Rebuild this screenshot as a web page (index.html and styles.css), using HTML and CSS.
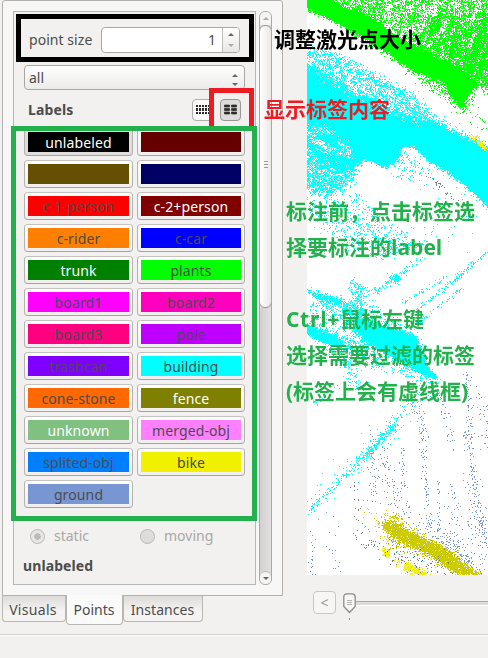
FILE: index.html
```html
<!DOCTYPE html>
<html lang="zh-CN">
<head>
<meta charset="utf-8">
<title>Point Labeler</title>
<link rel="stylesheet" href="styles.css">
</head>
<body>
<div class="window">
  <main class="workspace">
    <section class="sidebar">
      <div class="pane">
        <div class="panel">
          <div class="size-row"><label class="size-label">point size</label>
            <div class="spin"><span class="value">1</span><span class="arrows"><i class="up"></i><i class="down dim"></i></span></div>
          </div>
          <div class="combo"><span>all</span><span class="combo-arrows"><i class="up"></i><i class="down"></i></span></div>
          <div class="labels-head"><b class="labels-title">Labels</b>
            <span class="tool"><svg width="14" height="10" viewBox="0 0 14 10"><path d="M0 0h2v2H0zM3 0h2v2H3zM6 0h2v2H6zM9 0h2v2H9zM12 0h2v2h-2zM0 3h2v3H0zM3 3h2v3H3zM6 3h2v3H6zM9 3h2v3H9zM12 3h2v3h-2zM0 7h2v2H0zM3 7h2v2H3zM6 7h2v2H6zM9 7h2v2H9zM12 7h2v2h-2z" fill="#2b2b2b"/></svg></span>
            <span class="tool active"><svg width="13" height="11" viewBox="0 0 13 11"><path d="M.5 1h5v2h-5zM7.500 1h5v2h-5zM.5 4.500h5v2h-5zM7.500 4.500h5v2h-5zM.5 8h5v2h-5zM7.500 8h5v2h-5z" fill="#2b2b2b" stroke="#2b2b2b" stroke-width=".7"/></svg></span>
          </div>
          <div class="label-grid">
            <button class="tag selected"><span class="fill black light">unlabeled</span></button>
            <button class="tag"><span class="fill maroon"></span></button>
            <button class="tag"><span class="fill brown"></span></button>
            <button class="tag"><span class="fill navy"></span></button>
            <button class="tag"><span class="fill red">c-1-person</span></button>
            <button class="tag"><span class="fill darkred light">c-2+person</span></button>
            <button class="tag"><span class="fill orange">c-rider</span></button>
            <button class="tag"><span class="fill blue">c-car</span></button>
            <button class="tag"><span class="fill green light">trunk</span></button>
            <button class="tag"><span class="fill lime">plants</span></button>
            <button class="tag"><span class="fill magenta">board1</span></button>
            <button class="tag"><span class="fill pink">board2</span></button>
            <button class="tag"><span class="fill rose">board3</span></button>
            <button class="tag"><span class="fill purple">pole</span></button>
            <button class="tag"><span class="fill violet">trashcan</span></button>
            <button class="tag"><span class="fill cyan">building</span></button>
            <button class="tag"><span class="fill flame">cone-stone</span></button>
            <button class="tag"><span class="fill olive light">fence</span></button>
            <button class="tag"><span class="fill sage light">unknown</span></button>
            <button class="tag"><span class="fill orchid">merged-obj</span></button>
            <button class="tag"><span class="fill azure">splited-obj</span></button>
            <button class="tag"><span class="fill yellow">bike</span></button>
            <button class="tag"><span class="fill steel">ground</span></button>
          </div>
          <div class="radios"><span class="radio"><i class="dot checked"></i>static</span><span class="radio"><i class="dot"></i>moving</span></div>
          <b class="current">unlabeled</b>
        </div>
        <div class="scrollbar"><span class="sb-button"><i class="up dim"></i></span><span class="thumb"><i class="grip"></i></span><span class="track"></span><span class="sb-button bottom"><i class="down"></i></span></div>
      </div>
      <nav class="tabs"><span class="tab first">Visuals</span><span class="tab current-tab">Points</span><span class="tab last">Instances</span></nav>
    </section>
    <section class="view">
      <canvas id="cloud" class="cloud" width="181" height="575"></canvas>
      <div class="timeline"><button class="prev">&lt;</button>
        <div class="slider"><svg class="knob" width="13" height="28" viewBox="0 0 13 28"><path d="M.8 4Q.8 .8 4 .8H9Q12.200 .8 12.200 4V13.500L6.500 19.500L.8 13.500Z" fill="#f7f7f6" stroke="#8d8b88" stroke-width="1.300"/><path d="M4 7.500H9M4 9.500H9M4 11.500H9" stroke="#b5b3b0"/><path d="M6 25h1v2H6z" fill="#888"/></svg><span class="groove"></span></div>
      </div>
    </section>
  </main>
  <footer class="status"></footer>
  <div class="mark mark-size"></div>
  <div class="mark mark-content"></div>
  <div class="mark mark-labels"></div>
  <p class="note note-size">调整激光点大小</p>
  <p class="note note-content">显示标签内容</p>
  <p class="note note-pick">标注前，点击标签选<br>择要标注的label</p>
  <p class="note note-filter"><span class="latin">Ctrl+</span>鼠标左键<br>选择需要过滤的标签<br>(标签上会有虚线框)</p>
</div>
<script src="cloud.js"></script>
</body>
</html>
```
FILE: styles.css
```css
* { box-sizing: border-box; }
body { margin: 0; background: #f2f1f0; color: #4c4c4c; font: 14px/20px "Noto Sans", "Open Sans", sans-serif; }
.window { position: relative; width: 488px; height: 658px; overflow: hidden; }
.workspace { display: flex; height: 634px; }
.sidebar { width: 283px; padding-left: 2px; flex: none; }
.pane { height: 596px; display: flex; gap: 3px; padding: 10px 10px 10px; border: 1px solid #b3b1ad; border-radius: 3px 3px 0 0; background: #f7f7f7; }
.panel { width: 243px; height: 574px; border: 1px solid #b9b7b3; background: #f2f1ef; padding: 15px 10px 0; }
.size-row { display: flex; align-items: center; height: 26px; padding: 0 5px; }
.size-label { width: 72px; white-space: nowrap; letter-spacing: .05px; }
.spin { width: 139px; height: 26px; display: flex; border: 1px solid #aaa8a4; border-radius: 4px; background: #fff; overflow: hidden; }
.value { flex: 1; text-align: right; padding: 2px 6px 0 0; }
.arrows { width: 17px; border-left: 1px solid #bebcb8; background: linear-gradient(#fff, #e8e7e5); display: flex; flex-direction: column; align-items: center; justify-content: center; gap: 8px; }
.up, .down { display: block; width: 0; height: 0; border: 3px solid transparent; }
.up { border-top: 0; border-bottom: 3px solid #666; }
.down { border-bottom: 0; border-top: 3px solid #666; }
.up.dim { border-bottom-color: #aaa; }
.down.dim { border-top-color: #aaa; }
.combo { height: 25px; margin-top: 12px; display: flex; align-items: center; justify-content: space-between; padding: 0 6px 0 4px; border: 1px solid #a9a7a3; border-radius: 4px; background: linear-gradient(#fff, #ecebea); }
.combo-arrows { display: flex; flex-direction: column; gap: 6px; padding-top: 4px; }
.labels-head { height: 38px; display: flex; align-items: center; padding: 1px 4px 0 4px; }
.labels-title { flex: 1; letter-spacing: .15px; }
.tool { width: 21px; height: 22px; border: 1px solid #b2b0ac; border-radius: 4px; background: #fafafa; display: flex; align-items: center; justify-content: center; margin-left: 7px; }
.tool.active { background: #dddcda; border-color: #999794; }
.label-grid { display: grid; grid-template-columns: 109px 108px; column-gap: 4px; row-gap: 4px; grid-auto-rows: 28px; }
.tag { font: inherit; color: inherit; padding: 3px; border: 1px solid; border-color: #c4c2be #b4b2ae #a5a3a0; border-radius: 4px; background: linear-gradient(#fff, #f0efee); }
.tag.selected { background: #dedddb; }
.fill { display: block; height: 20px; line-height: 21px; letter-spacing: .12px; }
.light { color: #fff; }
.black { background: #000; } .maroon { background: #640000; } .brown { background: #645000; } .navy { background: #000064; }
.red { background: #f00; } .darkred { background: #800000; } .orange { background: #ff8000; } .blue { background: #00f; }
.green { background: #008000; } .lime { background: #0f0; } .magenta { background: #f0f; } .pink { background: #ff00bf; }
.rose { background: #ff0080; } .purple { background: #bf00ff; } .violet { background: #8000ff; } .cyan { background: #0ff; }
.flame { background: #ff6900; } .olive { background: #808000; } .sage { background: #80c080; } .orchid { background: #ff80ff; }
.azure { background: #0080ff; } .yellow { background: #f0f000; } .steel { background: #7896d2; }
.radios { display: grid; grid-template-columns: 110px 1fr; padding: 17px 0 0 6px; color: #aaa8a5; }
.radio { display: flex; align-items: center; gap: 9px; height: 22px; }
.dot { width: 15px; height: 15px; border: 1px solid #bab8b5; border-radius: 50%; background: #deddda; display: flex; }
.dot.checked { background: radial-gradient(circle, #bdbbb8 0 3px, #e7e6e4 3.500px); }
.current { display: block; margin: 9px 0 0 -1px; letter-spacing: .1px; }
.scrollbar { width: 13px; height: 574px; border: 1px solid #aaa8a5; border-radius: 6px; background: #dddcda; display: flex; flex-direction: column; overflow: hidden; }
.sb-button { height: 13px; background: #f5f4f3; display: flex; align-items: center; justify-content: center; flex: none; }
.bottom { border-top: 1px solid #b0aeaa; border-radius: 6px 6px 0 0; }
.thumb { height: 283px; margin: 0 -1px; border: 1px solid #999794; border-radius: 6px; background: linear-gradient(90deg, #fff, #e9e8e6); display: flex; align-items: center; justify-content: center; }
.grip { width: 4px; height: 7px; margin-top: -4px; background: repeating-linear-gradient(#999 0 1px, transparent 1px 3px); }
.track { flex: 1; background: linear-gradient(90deg, #d2d0ce, #e2e1df); }
.tabs { display: flex; align-items: flex-start; }
.tab { height: 26px; padding-top: 4px; text-align: center; white-space: nowrap; border: 1px solid #b9b7b3; border-top: 0; border-radius: 0 0 4px 4px; background: linear-gradient(#dddcda, #f4f3f2 60%); }
.first { width: 64px; padding-right: 2px; letter-spacing: .3px; }
.last { width: 80px; padding-right: 1px; letter-spacing: .05px; }
.current-tab { width: 57px; height: 30px; margin-top: -1px; padding-top: 5px; background: #fafafa; padding-right: 1px; }
.view { flex: 1; padding-left: 24px; min-width: 0; }
.cloud { display: block; background: #fff; }
.timeline { display: flex; padding: 16px 0 0 6px; gap: 8px; }
.prev { width: 23px; height: 23px; padding: 0; border: 1px solid #c9c7c4; border-radius: 4px; background: #f7f6f5; color: #999794; font: 14px/20px "Noto Sans", sans-serif; }
.slider { flex: 1; display: flex; align-items: flex-start; }
.knob { flex: none; margin: 2px 0 0 -1px; }
.groove { flex: 1; height: 5px; margin-top: 10px; border-top: 1px solid #adaba7; border-bottom: 1px solid #fff; background: #dedcda; }
.status { height: 24px; border-top: 1px solid #d4d2cf; box-shadow: inset 0 1px #fafafa; }
.mark { position: absolute; border: 5px solid; }
.mark-size { left: 16px; top: 14px; width: 238px; height: 48px; border-color: #000; }
.mark-content { left: 209px; top: 88px; width: 45px; height: 43px; border-color: #ed1c24; }
.mark-labels { left: 11px; top: 126px; width: 246px; height: 395px; border-color: #22b14c; }
.note { position: absolute; margin: 0; font: 700 21px/36px "Open Sans", "Noto Sans CJK SC", sans-serif; white-space: nowrap; }
.latin { letter-spacing: .7px; }
.note-size { left: 274px; top: 21px; color: #000; }
.note-content { left: 264px; top: 91px; color: #ed1c24; }
.note-pick { left: 286px; top: 193px; color: #22b14c; }
.note-filter { left: 286px; top: 301px; color: #22b14c; }
```
FILE: cloud.js
```js
const ctx = document.getElementById('cloud').getContext('2d');
let seed = 71993;
function rnd() {
  seed = (seed + 0x6D2B79F5) | 0;
  let t = Math.imul(seed ^ (seed >>> 15), 1 | seed);
  t = (t + Math.imul(t ^ (t >>> 7), 61 | t)) ^ t;
  return ((t ^ (t >>> 14)) >>> 0) / 4294967296;
}
const gauss = () => rnd() + rnd() + rnd() - 1.5;
function inside(x, y, p) {
  let hit = false;
  for (let i = 0, j = p.length - 1; i < p.length; j = i++) {
    const [a, b] = p[i], [c, d] = p[j];
    if ((b > y) !== (d > y) && x < (c - a) * (y - b) / (d - b) + a) hit = !hit;
  }
  return hit;
}
// Fill a polygon with points; blur softens its outline.
function area(color, density, blur, pts) {
  ctx.fillStyle = color;
  const xs = pts.map(p => p[0]), ys = pts.map(p => p[1]);
  for (let y = Math.floor(Math.min(...ys) - 2 * blur); y < Math.max(...ys) + 2 * blur; y++)
    for (let x = Math.max(0, Math.floor(Math.min(...xs) - 2 * blur)); x < Math.min(181, Math.max(...xs) + 2 * blur); x++)
      if (rnd() < density && inside(x + gauss() * blur, y + gauss() * blur, pts)) ctx.fillRect(x, y, 1, 1);
}
function streak(color, x1, y1, x2, y2, spread, count) {
  ctx.fillStyle = color;
  for (let i = 0; i < count; i++) {
    const t = rnd();
    ctx.fillRect(Math.round(x1 + (x2 - x1) * t + gauss() * spread), Math.round(y1 + (y2 - y1) * t + gauss() * spread), 1, 1);
  }
}
const G = '#00ff00', C = '#00ffff', W = '#ffffff', B = '#7896d2', Y = '#cccc00', L = '#f0f000', K = '#808080';

// foliage
area(G, .5, 4, [[15,-5],[190,-5],[190,96],[172,88],[150,68],[85,32],[45,15]]);
area(G, .4, 4, [[110,15],[190,15],[190,90],[160,80]]);
for (let i = 0; i < 26; i++) { const x = 60 + rnd() * 120, y = rnd() * 42; streak(W, x, y, x - 6, y + 15, 2, 32); }
for (let i = 0; i < 16; i++) { const x = 108 + rnd() * 72, y = 5 + rnd() * 50; streak(G, x, y, x - 6, y + 26, 3, 90); }
area(G, .4, 5, [[0,5],[42,28],[80,54],[112,79],[142,101],[156,112],[166,94],[140,72],[80,35],[20,3]]);
area(G, 1, 2.5, [[-8,-8],[16,-8],[34,5],[53,11],[69,20],[86,34],[106,44],[128,56],[148,64],[172,84],[162,93],[156,109],[144,97],[138,84],[120,75],[103,70],[85,56],[67,45],[45,32],[20,18],[-8,6]]);
streak(G, 155, 100, 180, 128, 12, 35);

// building facade
area(C, .42, 5, [[-8,46],[30,52],[60,70],[105,93],[130,118],[190,150],[175,158],[120,128],[80,114],[38,94],[-8,69]]);
area(C, 1, 2.5, [[-8,60],[18,74],[36,82],[44,93],[66,98],[85,109],[108,117],[132,124],[153,136],[190,153],[190,218],[174,201],[158,186],[139,171],[120,160],[107,147],[96,146],[89,161],[79,168],[59,160],[48,164],[35,152],[15,150],[-8,145]]);
area(C, .66, 5, [[-8,138],[48,148],[54,162],[43,184],[23,196],[-8,188]]);
area(C, .7, 3, [[6,150],[45,155],[48,166],[30,170],[10,160]]);
for (const [x, y, dx, dy] of [[0,131,14,13],[9,144,20,6],[30,140,12,14],[5,128,20,4]]) streak(W, x, y, x + dx, y + dy, 5, 90);
streak(W, 8, 74, 60, 97, 9, 160);
streak(W, 60, 102, 110, 121, 6, 90);
streak(C, 84, 122, 174, 200, 30, 120);
streak(C, 93, 156, 104, 178, 14, 80);
area(C, .16, 5, [[0,188],[30,198],[65,216],[105,236],[80,258],[40,245],[0,212]]);
for (const v of [[45,194,76,220,4,50],[97,152,118,182,9,30],[107,215,160,240,18,24],[0,224,110,247,10,60],[70,256,125,239,5,70],[90,278,43,304,4,70],[0,292,34,300,3,90],[84,276,92,280,4,50],[0,237,15,250,5,30]]) streak(C, ...v);
area(C, .75, 3, [[0,288],[20,297],[36,300],[30,306],[14,302]]);
area(C, .45, 4, [[43,278],[59,287],[53,301],[43,294]]);
area(C, .55, 4, [[22,298],[49,303],[67,320],[41,325],[34,310]]);
for (const v of [[181,250,135,292,1.5,70],[166,262,100,318,2,90],[140,276,96,302,3,50],[154,288,109,324,2,60],[114,258,68,293,4,70]]) streak(C, ...v);

// central wall cluster
area(C, .18, 7, [[3,298],[57,300],[109,335],[121,376],[68,369],[22,350],[0,325]]);
area(C, 1, 2, [[46,315],[67,322],[90,329],[108,335],[115,348],[118,363],[133,380],[119,376],[99,366],[80,354],[60,342],[46,329]]);
area(C, .95, 2, [[-4,323],[13,328],[27,335],[38,348],[16,343],[-4,332]]);
for (const v of [[10,330,68,366,9,180],[28,342,70,350,10,100],[42,322,72,355,9,120],[101,362,129,392,12,110],[0,410,31,385,5,20],[32,356,52,388,8,90]]) streak(C, ...v);
streak(C, 111, 396, 51, 460, 7, 150);
streak(C, 90, 425, 0, 512, 4, 190);
streak(C, 85, 428, 53, 460, 3, 90);
streak(C, 93, 418, 8, 500, 18, 60);

// scan lines on the ground
for (const v of [[160,365,164,450,4,65],[113,405,121,530,3,90],[65,435,66,505,5,48],[77,453,88,508,8,65],[94,445,99,520,4,48],[158,430,178,544,4,100],[134,394,145,450,6,36],[131,480,132,532,2,23],[145,484,150,550,5,27],[102,400,119,440,5,24],[174,385,181,455,7,48],[19,510,31,575,8,18],[4,526,5,574,4,18],[167,473,181,560,13,80],[140,540,176,570,12,90],[116,520,157,564,12,120],[150,514,181,530,20,40]]) streak(B, ...v);
streak(K, 44, 480, 53, 550, 7, 28);
streak(K, 105, 159, 155, 205, 4, 14);
streak(K, 128, 182, 134, 188, 4, 20);

// low vegetation
area(Y, .94, 3, [[76,523],[87,522],[96,529],[108,533],[124,541],[141,551],[157,563],[177,576],[158,576],[144,570],[126,557],[104,546],[91,539],[76,529]]);
area(Y, .45, 5, [[75,517],[92,515],[111,535],[143,550],[170,575],[155,575],[112,552],[87,543],[78,532]]);
streak(Y, 60, 507, 97, 550, 12, 100);
area(L, .88, 3, [[97,564],[106,565],[121,573],[118,577],[98,571]]);
area(L, .75, 2, [[75,547],[83,548],[81,557],[74,554]]);
area(L, .8, 2, [[162,135],[171,136],[181,149],[175,149]]);
streak(K, 78, 548, 139, 573, 14, 110);
streak(K, 58, 547, 66, 540, 5, 18);
streak(L, 88, 560, 123, 577, 11, 70);
streak('#0080ff', 80, 555, 130, 560, 10, 8);
```
